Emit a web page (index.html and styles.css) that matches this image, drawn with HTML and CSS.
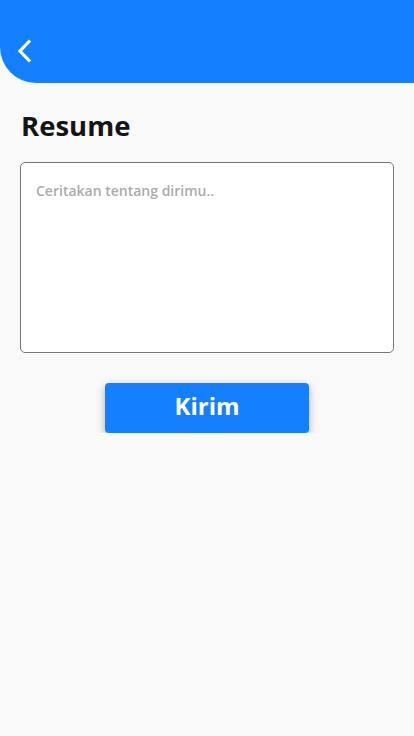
FILE: index.html
```html
<!DOCTYPE html>
<html>
<head>
<meta charset="utf-8">
<link rel="stylesheet" href="styles.css">
</head>
<body>
<header class="topbar">
  <button class="back" aria-label="Kembali">
    <svg width="16" height="24" viewBox="0 0 16 24"><path d="M13 1.5 L3 12 L13 22.5" fill="none" stroke="#fff" stroke-width="3.2"/></svg>
  </button>
</header>
<main class="content">
  <h1 class="title">Resume</h1>
  <textarea class="field" placeholder="Ceritakan tentang dirimu.."></textarea>
  <div class="actions">
    <button class="submit">Kirim</button>
  </div>
</main>
</body>
</html>
```
FILE: styles.css
```css
html, body {
  margin: 0;
  padding: 0;
  background: #f9f9f9;
  font-family: "Open Sans", "Noto Sans", sans-serif;
}
.topbar {
  height: 83px;
  background: #1580ff;
  border-bottom-left-radius: 36px;
  display: flex;
  align-items: flex-end;
  box-sizing: border-box;
  padding: 0 0 19px 17px;
}
.back {
  background: none;
  border: none;
  padding: 0;
  width: 18px;
  height: 26px;
  display: flex;
  align-items: center;
}
.content {
  padding: 0 20px;
}
.title {
  margin: 23px 0 0 1px;
  font-size: 27.5px;
  font-weight: 700;
  color: #151515;
  line-height: 40px;
}
.field {
  display: block;
  box-sizing: border-box;
  width: 374px;
  height: 191px;
  margin-top: 16px;
  border: 1px solid #777;
  border-radius: 5px;
  background: #fff;
  padding: 18px 15px;
  font-family: "Open Sans", "Noto Sans", sans-serif;
  font-size: 14px;
  font-weight: 600;
  resize: none;
  outline: none;
}
.field::placeholder {
  color: #ababab;
}
.actions {
  display: flex;
  justify-content: center;
  margin-top: 30px;
}
.submit {
  width: 204px;
  height: 50px;
  border: none;
  border-radius: 4px;
  background: #1580ff;
  color: #fff;
  font-family: "Open Sans", "Noto Sans", sans-serif;
  font-size: 24px;
  font-weight: 700;
  padding: 0 0 6px;
  box-shadow: 0 3px 8px rgba(0,0,0,0.3);
}
```
